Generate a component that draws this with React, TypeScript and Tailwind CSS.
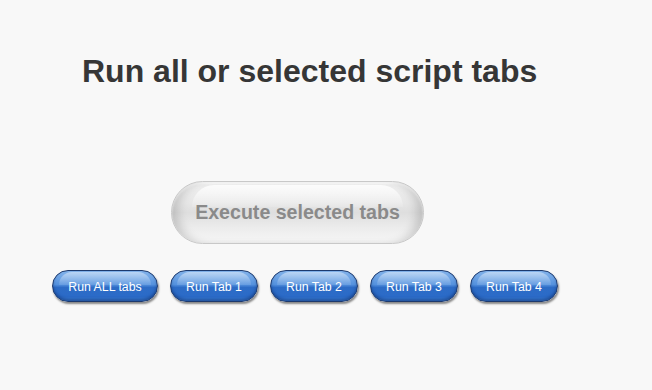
import React from "react";

const tabs = ["Run ALL tabs", "Run Tab 1", "Run Tab 2", "Run Tab 3", "Run Tab 4"];

function BlueButton({ label, wide }: { label: string; wide?: boolean }) {
  return (
    <button
      className={`relative h-[32px] ${wide ? "w-[106px]" : "w-[88px]"} rounded-full border border-[#1d3a6e] bg-[linear-gradient(to_bottom,#84b4ec_0%,#5592de_45%,#2d6cc6_55%,#2b6bc8_85%,#3f82da_100%)] shadow-[1px_2px_2px_rgba(0,0,0,0.45),inset_0_-2px_3px_rgba(10,40,100,0.5)] pt-[2px] text-[12.3px] text-white [font-family:'Liberation_Sans',Arial,sans-serif]`}
    >
      <span className="absolute left-[6px] right-[6px] top-[1px] h-[13px] rounded-t-full bg-[linear-gradient(to_bottom,rgba(255,255,255,0.45),rgba(255,255,255,0.1))]" />
      <span className="relative">{label}</span>
    </button>
  );
}

export default function App() {
  return (
    <div className="w-[652px] h-[390px] bg-[#f8f8f8] [font-family:'Liberation_Sans',Arial,sans-serif]">
      <div className="pt-[53px] pl-[82px]">
        <h1 className="text-[32px] font-bold text-[#363636] leading-[36px]">
          Run all or selected script tabs
        </h1>
      </div>
      <div className="mt-[92px] pl-[171px]">
        <button className="relative w-[253px] h-[63px] rounded-full border border-[#c8c8c8] bg-[linear-gradient(to_bottom,#f0f0f0_0%,#e6e6e6_35%,#dedede_50%,#ececec_75%,#f6f6f6_100%)] shadow-[inset_10px_0_10px_-4px_rgba(0,0,0,0.15),inset_-10px_0_10px_-4px_rgba(0,0,0,0.15),inset_0_2px_2px_rgba(255,255,255,0.9)] text-[19.6px] font-bold text-[#8a8a8a]">
          <span className="absolute left-[20px] right-[20px] top-[3px] h-[22px] rounded-t-full bg-[linear-gradient(to_bottom,rgba(255,255,255,0.8),rgba(255,255,255,0.1))]" />
          <span className="relative">Execute selected tabs</span>
        </button>
      </div>
      <div className="mt-[26px] pl-[52px] flex gap-[12px]">
        {tabs.map((t, i) => (
          <BlueButton key={t} label={t} wide={i === 0} />
        ))}
      </div>
    </div>
  );
}
